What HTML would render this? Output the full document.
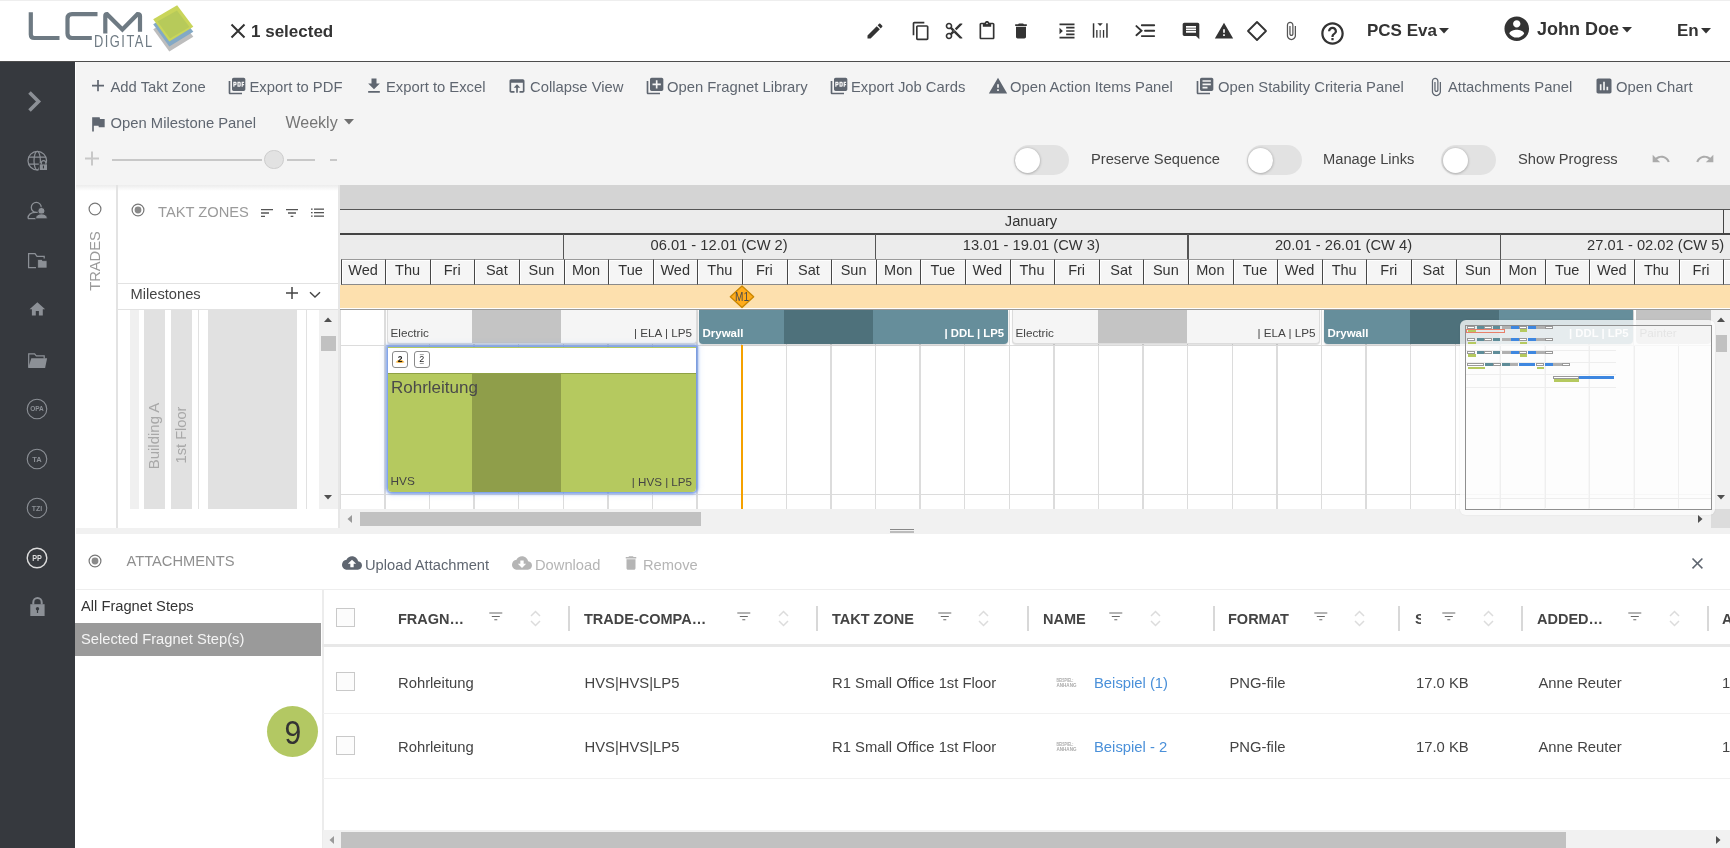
<!DOCTYPE html>
<html><head><meta charset="utf-8">
<style>
*{box-sizing:border-box;margin:0;padding:0}
html,body{width:1730px;height:848px;overflow:hidden;background:#fff;font-family:"Liberation Sans",sans-serif;color:#333}
.a{position:absolute}
.t{position:absolute;white-space:nowrap;line-height:1}
svg{position:absolute;display:block;overflow:visible}
</style></head><body><div style="position:absolute;left:0;top:0;width:1730px;height:848px;overflow:hidden;will-change:transform">
<div class="a" style="left:0px;top:0px;width:1730px;height:61px;background:#fff;"></div>
<div class="a" style="left:0px;top:0px;width:1730px;height:1px;background:#eeeeee;"></div>
<div class="a" style="left:0px;top:61px;width:1730px;height:1px;background:#4d4d4d;"></div>
<svg style="left:20px;top:0px" width="180" height="60" viewBox="0 0 180 60">
<g fill="none" stroke="#6e7a83" stroke-width="4.2">
<path d="M10.8 12.3 V34.5 Q10.8 38 14.3 38 H39.5"/>
<path d="M77.5 14.2 H52 Q47.5 14.2 47.5 18.7 V33.5 Q47.5 38 52 38 H71.8"/>
<path d="M85.3 33.5 V16 Q85.3 14.2 87 14.2 L102.4 29.5 L117.5 14.2 Q120 14.2 120 16 V31.7"/>
</g>
<g transform="translate(74 47) scale(0.74 1)"><text x="0" y="0" font-family="Liberation Sans" font-size="17.4" fill="#6e7a83" textLength="78.5" lengthAdjust="spacing">DIGITAL</text></g>
<polygon points="133.2,29.3 157.1,15.2 173.3,36.8 149.3,51.6" fill="#bdbdbd"/>
<polygon points="133.2,24.3 157.1,10.2 173.3,31.8 149.3,46.6" fill="#83a9c6"/>
<polygon points="133.2,19.3 157.1,5.2 173.3,26.8 149.3,41.6" fill="#c9d55a"/>
<polygon points="137.5,21.5 157,10.5 169.5,27 150,38.5" fill="#b3c75a" opacity="0.8"/>
</svg>
<svg style="left:229px;top:22px" width="18" height="18" viewBox="0 0 18 18"><path d="M2.5 2.5 L15.5 15.5 M15.5 2.5 L2.5 15.5" stroke="#333" stroke-width="2"/></svg>
<div class="t" style="left:251px;top:23px;font-size:17px;color:#333;font-weight:bold;">1 selected</div>
<svg style="left:864.5px;top:21px;" width="20" height="20" viewBox="0 0 24 24"><path fill="#333" d="M3 17.25V21h3.75L17.81 9.94l-3.75-3.75L3 17.25zM20.71 7.04c.39-.39.39-1.02 0-1.41l-2.34-2.34c-.39-.39-1.02-.39-1.41 0l-1.83 1.83 3.75 3.75 1.83-1.83z"/></svg>
<svg style="left:910.5px;top:21px;" width="20" height="20" viewBox="0 0 24 24"><path fill="#333" d="M16 1H4c-1.1 0-2 .9-2 2v14h2V3h12V1zm3 4H8c-1.1 0-2 .9-2 2v14c0 1.1.9 2 2 2h11c1.1 0 2-.9 2-2V7c0-1.1-.9-2-2-2zm0 16H8V7h11v14z"/></svg>
<svg style="left:944px;top:21px;" width="20" height="20" viewBox="0 0 24 24"><path fill="#333" d="M9.64 7.64c.23-.5.36-1.05.36-1.64 0-2.21-1.79-4-4-4S2 3.79 2 6s1.79 4 4 4c.59 0 1.14-.13 1.64-.36L10 12l-2.36 2.36C7.14 14.13 6.59 14 6 14c-2.21 0-4 1.79-4 4s1.79 4 4 4 4-1.79 4-4c0-.59-.13-1.14-.36-1.64L12 14l7 7h3v-1L9.64 7.64zM6 8c-1.1 0-2-.89-2-2s.9-2 2-2 2 .89 2 2-.9 2-2 2zm0 12c-1.1 0-2-.89-2-2s.9-2 2-2 2 .89 2 2-.9 2-2 2zm6-7.5c-.28 0-.5-.22-.5-.5s.22-.5.5-.5.5.22.5.5-.22.5-.5.5zM19 3l-6 6 2 2 7-7V3z"/></svg>
<svg style="left:977px;top:21px;" width="20" height="20" viewBox="0 0 24 24"><path fill="#333" d="M19 2h-4.18C14.4.84 13.3 0 12 0c-1.3 0-2.4.84-2.82 2H5c-1.1 0-2 .9-2 2v16c0 1.1.9 2 2 2h14c1.1 0 2-.9 2-2V4c0-1.1-.9-2-2-2zm-7 0c.55 0 1 .45 1 1s-.45 1-1 1-1-.45-1-1 .45-1 1-1zm7 18H5V4h2v3h10V4h2v16z"/></svg>
<svg style="left:1011px;top:21px;" width="20" height="20" viewBox="0 0 24 24"><path fill="#333" d="M6 19c0 1.1.9 2 2 2h8c1.1 0 2-.9 2-2V7H6v12zM19 4h-3.5l-1-1h-5l-1 1H5v2h14V4z"/></svg>
<svg style="left:1056.5px;top:21px;" width="20" height="20" viewBox="0 0 24 24"><path fill="#333" d="M3 21h18v-2H3v2zM3 8v8l4-4-4-4zm8 9h10v-2H11v2zM3 3v2h18V3H3zm8 6h10V7H11v2zm0 4h10v-2H11v2z"/></svg>
<svg style="left:1085px;top:15px" width="80" height="30" viewBox="0 0 80 30"><g fill="#333"><rect x="7.8" y="8.3" width="1.5" height="14.4"/><rect x="11.2" y="15" width="1.3" height="7.7"/><rect x="14.6" y="15" width="1.2" height="7.7" fill="#555"/><rect x="17.9" y="15" width="1.3" height="7.7"/><rect x="21.2" y="8.3" width="1.5" height="14.4"/><path d="M12.4 8.3 L17.8 8.3 L15.1 11z"/></g><path d="M51.4 11.1 L56.5 15.7 L51.4 20.2" fill="none" stroke="#333" stroke-width="1.9" stroke-linecap="round"/><g stroke="#333" stroke-width="1.85" stroke-linecap="round"><path d="M56.8 10.2 H69.2 M60 15.7 H69.2 M56.8 21.1 H69.2"/></g></svg>
<svg style="left:1180.5px;top:21px;" width="20" height="20" viewBox="0 0 24 24"><path fill="#333" d="M21.99 4c0-1.1-.89-2-1.99-2H4c-1.1 0-2 .9-2 2v12c0 1.1.9 2 2 2h14l4 4-.01-18zM18 14H6v-2h12v2zm0-3H6V9h12v2zm0-3H6V6h12v2z"/></svg>
<svg style="left:1213.7px;top:21px;" width="20" height="20" viewBox="0 0 24 24"><path fill="#333" d="M1 21h22L12 2 1 21zm12-3h-2v-2h2v2zm0-4h-2v-4h2v4z"/></svg>
<svg style="left:1247px;top:21px" width="20" height="20" viewBox="0 0 20 20"><path d="M10 1 L19 10 L10 19 L1 10z" fill="none" stroke="#333" stroke-width="1.8" stroke-linejoin="round"/></svg>
<svg style="left:1281px;top:21px;" width="20" height="20" viewBox="0 0 24 24"><path fill="#555" d="M16.5 6v11.5c0 2.21-1.79 4-4 4s-4-1.79-4-4V5c0-1.38 1.12-2.5 2.5-2.5s2.5 1.12 2.5 2.5v10.5c0 .55-.45 1-1 1s-1-.45-1-1V6H10v9.5c0 1.38 1.12 2.5 2.5 2.5s2.5-1.12 2.5-2.5V5c0-2.21-1.79-4-4-4S7 2.79 7 5v12.5c0 3.04 2.46 5.5 5.5 5.5s5.5-2.46 5.5-5.5V6h-1.5z"/></svg>
<svg style="left:1319px;top:19.8px;" width="27" height="27" viewBox="0 0 24 24"><path fill="#333" d="M11 18h2v-2h-2v2zm1-16C6.48 2 2 6.48 2 12s4.48 10 10 10 10-4.48 10-10S17.52 2 12 2zm0 18c-4.41 0-8-3.59-8-8s3.59-8 8-8 8 3.59 8 8-3.59 8-8 8zm0-14c-2.21 0-4 1.79-4 4h2c0-1.1.9-2 2-2s2 .9 2 2c0 2-3 1.75-3 5h2c0-2.25 3-2.5 3-5 0-2.21-1.79-4-4-4z"/></svg>
<div class="t" style="left:1367px;top:22px;font-size:17px;color:#333;font-weight:bold;">PCS Eva</div>
<svg style="left:1439px;top:28px" width="10" height="6" viewBox="0 0 10 6"><path d="M0 0 H10 L5 5.5z" fill="#333"/></svg>
<svg style="left:1501.5px;top:14px;" width="29.5" height="29.5" viewBox="0 0 24 24"><path fill="#333" d="M12 2C6.48 2 2 6.48 2 12s4.48 10 10 10 10-4.48 10-10S17.52 2 12 2zm0 3c1.66 0 3 1.34 3 3s-1.34 3-3 3-3-1.34-3-3 1.34-3 3-3zm0 14.2c-2.5 0-4.71-1.28-6-3.22.03-1.99 4-3.08 6-3.08 1.99 0 5.97 1.09 6 3.08-1.29 1.94-3.5 3.22-6 3.22z"/></svg>
<div class="t" style="left:1537px;top:20px;font-size:18px;color:#333;font-weight:bold;">John Doe</div>
<svg style="left:1622px;top:27px" width="10" height="6" viewBox="0 0 10 6"><path d="M0 0 H10 L5 5.5z" fill="#333"/></svg>
<div class="t" style="left:1677px;top:22px;font-size:17px;color:#333;font-weight:bold;">En</div>
<svg style="left:1701px;top:28px" width="10" height="6" viewBox="0 0 10 6"><path d="M0 0 H10 L5 5.5z" fill="#333"/></svg>
<div class="a" style="left:0px;top:62px;width:75px;height:786px;background:#36393e;"></div>
<svg style="left:26px;top:89px" width="18" height="25" viewBox="0 0 18 25"><path d="M3.5 3.5 L12.5 12.5 L3.5 21.5" fill="none" stroke="#8c9096" stroke-width="3.6"/></svg>
<svg style="left:22px;top:145px" width="30" height="30" viewBox="0 0 30 30"><g fill="none" stroke="#8c9096" stroke-width="1.2">
<circle cx="15.3" cy="15.7" r="9.3"/><ellipse cx="15.2" cy="15.7" rx="3.2" ry="9.3"/><path d="M6.6 12.2 H24 M6.6 19.1 H24"/></g>
<path d="M16.8 18.2 H27 V26.5 H16.8z" fill="#36393e"/>
<path d="M19.3 19.6 V17.9 a2.3 2.3 0 0 1 4.6 0 V19.6" fill="none" stroke="#8c9096" stroke-width="1.2"/>
<rect x="17.8" y="19.4" width="7.2" height="5.6" fill="#8c9096"/><rect x="20.9" y="20.6" width="1.1" height="2.8" fill="#36393e"/></svg>
<svg style="left:22px;top:195px" width="30" height="30" viewBox="0 0 30 30"><g fill="none" stroke="#8c9096" stroke-width="1.25">
<circle cx="14.3" cy="12.4" r="5"/><path d="M6 23.6 C6 19.4 9.2 17.4 13.8 17.4 M6 23.6 H14"/></g>
<circle cx="19.4" cy="16" r="3.6" fill="#8c9096" stroke="#36393e" stroke-width="1"/><path d="M13.6 23.8 C13.6 20.3 16.2 18.9 19.5 18.9 C22.8 18.9 25.3 20.3 25.3 23.8z" fill="#8c9096" stroke="#36393e" stroke-width="0.8"/></svg>
<svg style="left:22px;top:245px" width="30" height="30" viewBox="0 0 30 30"><path d="M14 22.5 H6.6 V8.6 H13 L15 11.4 H22.2 V13.5" fill="none" stroke="#8c9096" stroke-width="1.25"/>
<path d="M15.6 14.4 H19.4 L20.6 15.6 H25 V23.1 H15.6z" fill="#8c9096" stroke="#36393e" stroke-width="0.8"/></svg>
<svg style="left:27.9px;top:300.2px;" width="18.7" height="18.7" viewBox="0 0 24 24"><path fill="#8c9096" d="M10 20v-6h4v6h5v-8h3L12 3 2 12h3v8z"/></svg>
<svg style="left:22px;top:345px" width="30" height="30" viewBox="0 0 30 30"><path d="M6.7 22.5 V8.9 H12.6 L14.3 10.9 H22.2 V13.4" fill="none" stroke="#8c9096" stroke-width="1.2"/>
<path d="M9.3 13.2 H25.1 L23.1 23 H6.2z" fill="#8c9096"/></svg>
<svg style="left:26px;top:398px" width="22" height="22" viewBox="0 0 22 22"><circle cx="11" cy="11" r="9.8" fill="none" stroke="#8c9096" stroke-width="1.1"/><text x="11" y="13.34" text-anchor="middle" font-family="Liberation Sans" font-size="6.5" font-weight="bold" fill="#8c9096">OPA</text></svg>
<svg style="left:26px;top:448px" width="22" height="22" viewBox="0 0 22 22"><circle cx="11" cy="11" r="9.8" fill="none" stroke="#8c9096" stroke-width="1.1"/><text x="11" y="13.70" text-anchor="middle" font-family="Liberation Sans" font-size="7.5" font-weight="bold" fill="#8c9096">TA</text></svg>
<svg style="left:26px;top:497px" width="22" height="22" viewBox="0 0 22 22"><circle cx="11" cy="11" r="9.8" fill="none" stroke="#8c9096" stroke-width="1.1"/><text x="11" y="13.52" text-anchor="middle" font-family="Liberation Sans" font-size="7" font-weight="bold" fill="#8c9096">TZI</text></svg>
<svg style="left:26px;top:547px" width="22" height="22" viewBox="0 0 22 22"><circle cx="11" cy="11" r="9.8" fill="none" stroke="#dcdcdc" stroke-width="1.4"/><text x="11" y="14.06" text-anchor="middle" font-family="Liberation Sans" font-size="8.5" font-weight="bold" fill="#dcdcdc" transform="translate(11 0) scale(0.85 1) translate(-11 0)">PP</text></svg>
<svg style="left:22px;top:590px" width="30" height="30" viewBox="0 0 30 30"><path d="M11.3 14.5 V12.2 a4.2 4.2 0 0 1 8.4 0 V14.5" fill="none" stroke="#8c9096" stroke-width="2"/><rect x="8.3" y="14.2" width="14.3" height="11.8" fill="#8c9096"/><circle cx="15.5" cy="18.8" r="1.7" fill="#36393e"/><rect x="14.9" y="19" width="1.2" height="4" fill="#36393e"/></svg>
<div class="a" style="left:75px;top:62px;width:1px;height:786px;background:#ffffff;"></div>
<div class="a" style="left:76px;top:62px;width:1654px;height:123px;background:#f4f4f4;"></div>
<svg style="left:91px;top:79px" width="14" height="14" viewBox="0 0 14 14"><path d="M1 6.7 H13 M7 1 V12.3" stroke="#5f6670" stroke-width="1.7"/></svg>
<div class="t" style="left:110.5px;top:80px;font-size:14.8px;color:#5f6670;">Add Takt Zone</div>
<svg style="left:227.4px;top:75.6px;" width="20" height="20" viewBox="0 0 24 24"><path fill="#5f6670" d="M20 2H8c-1.1 0-2 .9-2 2v12c0 1.1.9 2 2 2h12c1.1 0 2-.9 2-2V4c0-1.1-.9-2-2-2zm-8.5 7.5c0 .83-.67 1.5-1.5 1.5H9v2H7.5V7H10c.83 0 1.5.67 1.5 1.5v1zm5 2c0 .83-.67 1.5-1.5 1.5h-2.5V7H15c.83 0 1.5.67 1.5 1.5v3zm4-3H19v1h1.5V11H19v2h-1.5V7h3v1.5zM9 9.5h1v-1H9v1zM4 6H2v14c0 1.1.9 2 2 2h14v-2H4V6zm10 5.5h1v-3h-1v3z"/></svg>
<div class="t" style="left:249.5px;top:80px;font-size:14.8px;color:#5f6670;">Export to PDF</div>
<svg style="left:364px;top:76px;" width="20" height="20" viewBox="0 0 24 24"><path fill="#5f6670" d="M19 9h-4V3H9v6H5l7 7 7-7zM5 18v2h14v-2H5z"/></svg>
<div class="t" style="left:386px;top:80px;font-size:14.8px;color:#5f6670;">Export to Excel</div>
<svg style="left:507px;top:76.2px;" width="20" height="20" viewBox="0 0 24 24"><path fill="#5f6670" d="M19 4H5c-1.11 0-2 .9-2 2v12c0 1.1.89 2 2 2h4v-2H5V8h14v10h-4v2h4c1.1 0 2-.9 2-2V6c0-1.1-.89-2-2-2zm-7 6l-4 4h3v6h2v-6h3l-4-4z"/></svg>
<div class="t" style="left:530px;top:80px;font-size:14.8px;color:#5f6670;">Collapse View</div>
<svg style="left:644.5px;top:76px;" width="20" height="20" viewBox="0 0 24 24"><path fill="#5f6670" d="M4 6H2v14c0 1.1.9 2 2 2h14v-2H4V6zm16-4H8c-1.1 0-2 .9-2 2v12c0 1.1.9 2 2 2h12c1.1 0 2-.9 2-2V4c0-1.1-.9-2-2-2zm-1 9h-4v4h-2v-4H9V9h4V5h2v4h4v2z"/></svg>
<div class="t" style="left:667px;top:80px;font-size:14.8px;color:#5f6670;">Open Fragnet Library</div>
<svg style="left:829.3px;top:75.6px;" width="20" height="20" viewBox="0 0 24 24"><path fill="#5f6670" d="M20 2H8c-1.1 0-2 .9-2 2v12c0 1.1.9 2 2 2h12c1.1 0 2-.9 2-2V4c0-1.1-.9-2-2-2zm-8.5 7.5c0 .83-.67 1.5-1.5 1.5H9v2H7.5V7H10c.83 0 1.5.67 1.5 1.5v1zm5 2c0 .83-.67 1.5-1.5 1.5h-2.5V7H15c.83 0 1.5.67 1.5 1.5v3zm4-3H19v1h1.5V11H19v2h-1.5V7h3v1.5zM9 9.5h1v-1H9v1zM4 6H2v14c0 1.1.9 2 2 2h14v-2H4V6zm10 5.5h1v-3h-1v3z"/></svg>
<div class="t" style="left:851px;top:80px;font-size:14.8px;color:#5f6670;">Export Job Cards</div>
<svg style="left:987.5px;top:76.2px;" width="20" height="20" viewBox="0 0 24 24"><path fill="#5f6670" d="M1 21h22L12 2 1 21zm12-3h-2v-2h2v2zm0-4h-2v-4h2v4z"/></svg>
<div class="t" style="left:1010px;top:80px;font-size:14.8px;color:#5f6670;">Open Action Items Panel</div>
<svg style="left:1195px;top:76.3px;" width="20" height="20" viewBox="0 0 24 24"><path fill="#5f6670" d="M4 6H2v14c0 1.1.9 2 2 2h14v-2H4V6zm16-4H8c-1.1 0-2 .9-2 2v12c0 1.1.9 2 2 2h12c1.1 0 2-.9 2-2V4c0-1.1-.9-2-2-2zm-1 9H9V9h10v2zm-4 4H9v-2h6v2zm4-8H9V5h10v2z"/></svg>
<div class="t" style="left:1218px;top:80px;font-size:14.8px;color:#5f6670;">Open Stability Criteria Panel</div>
<svg style="left:1425.5px;top:76.5px;" width="20" height="20" viewBox="0 0 24 24"><path fill="#5f6670" d="M16.5 6v11.5c0 2.21-1.79 4-4 4s-4-1.79-4-4V5c0-1.38 1.12-2.5 2.5-2.5s2.5 1.12 2.5 2.5v10.5c0 .55-.45 1-1 1s-1-.45-1-1V6H10v9.5c0 1.38 1.12 2.5 2.5 2.5s2.5-1.12 2.5-2.5V5c0-2.21-1.79-4-4-4S7 2.79 7 5v12.5c0 3.04 2.46 5.5 5.5 5.5s5.5-2.46 5.5-5.5V6h-1.5z"/></svg>
<div class="t" style="left:1448px;top:80px;font-size:14.8px;color:#5f6670;">Attachments Panel</div>
<svg style="left:1593.5px;top:75.5px;" width="20" height="20" viewBox="0 0 24 24"><path fill="#5f6670" d="M19 3H5c-1.1 0-2 .9-2 2v14c0 1.1.9 2 2 2h14c1.1 0 2-.9 2-2V5c0-1.1-.9-2-2-2zM9 17H7v-7h2v7zm4 0h-2V7h2v10zm4 0h-2v-4h2v4z"/></svg>
<div class="t" style="left:1616px;top:80px;font-size:14.8px;color:#5f6670;">Open Chart</div>
<svg style="left:88px;top:113.7px;" width="20" height="20" viewBox="0 0 24 24"><path fill="#5f6670" d="M14.4 6L14 4H5v17h2v-7h5.6l.4 2h7V6z"/></svg>
<div class="t" style="left:110.5px;top:116px;font-size:14.8px;color:#5f6670;">Open Milestone Panel</div>
<div class="t" style="left:285.5px;top:115px;font-size:16px;color:#757575;">Weekly</div>
<svg style="left:344px;top:119px" width="10" height="6" viewBox="0 0 10 6"><path d="M0 0 H10 L5 5.5z" fill="#707070"/></svg>
<svg style="left:80px;top:146px" width="24" height="24" viewBox="0 0 24 24"><path d="M5 12.5 H19 M12 5.5 V19.5" stroke="#c8c8c8" stroke-width="2"/></svg>
<div class="a" style="left:112px;top:159px;width:150px;height:2px;background:#c8c8c8;"></div>
<div class="a" style="left:287px;top:159px;width:28px;height:2px;background:#c8c8c8;"></div>
<div class="a" style="left:330px;top:159px;width:7px;height:1.5px;background:#c8c8c8;"></div>
<div class="a" style="left:264.2px;top:149.5px;width:19.5px;height:19.5px;border-radius:50%;background:#e2e2e2;border:1px solid #cdcdcd"></div>
<div class="a" style="left:1013.5px;top:145px;width:55px;height:30px;border-radius:15px;background:#e2e2e2"></div>
<div class="a" style="left:1015.0px;top:147.6px;width:25px;height:25px;border-radius:50%;background:#fff;box-shadow:0 0.5px 3px rgba(0,0,0,0.32)"></div>
<div class="t" style="left:1091px;top:152px;font-size:14.7px;color:#444;">Preserve Sequence</div>
<div class="a" style="left:1246.5px;top:145px;width:55px;height:30px;border-radius:15px;background:#e2e2e2"></div>
<div class="a" style="left:1248.0px;top:147.6px;width:25px;height:25px;border-radius:50%;background:#fff;box-shadow:0 0.5px 3px rgba(0,0,0,0.32)"></div>
<div class="t" style="left:1323px;top:152px;font-size:14.7px;color:#444;">Manage Links</div>
<div class="a" style="left:1441px;top:145px;width:55px;height:30px;border-radius:15px;background:#e2e2e2"></div>
<div class="a" style="left:1442.5px;top:147.6px;width:25px;height:25px;border-radius:50%;background:#fff;box-shadow:0 0.5px 3px rgba(0,0,0,0.32)"></div>
<div class="t" style="left:1518px;top:152px;font-size:14.7px;color:#444;">Show Progress</div>
<svg style="left:1650.5px;top:148.8px;" width="20" height="20" viewBox="0 0 24 24"><path fill="#ababab" d="M12.5 8c-2.65 0-5.05.99-6.9 2.6L2 7v9h9l-3.62-3.62c1.39-1.16 3.16-1.88 5.12-1.88 3.54 0 6.55 2.31 7.6 5.5l2.37-.78C21.08 11.03 17.15 8 12.5 8z"/></svg>
<svg style="left:1694.5px;top:148.8px;" width="20" height="20" viewBox="0 0 24 24"><path fill="#ababab" d="M18.4 10.6C16.55 8.99 14.15 8 11.5 8c-4.65 0-8.58 3.03-9.96 7.22L3.9 16c1.05-3.19 4.05-5.5 7.6-5.5 1.95 0 3.73.72 5.12 1.88L13 16h9V7l-3.6 3.6z"/></svg>
<div class="a" style="left:76px;top:185px;width:1654px;height:343px;background:#ffffff;"></div>
<div class="a" style="left:76px;top:185px;width:1654px;height:6px;background:linear-gradient(#ececec,rgba(255,255,255,0))"></div>
<div class="a" style="left:116px;top:185px;width:2px;height:343px;background:#e3e3e3;"></div>
<svg style="left:88px;top:202px" width="14" height="14" viewBox="0 0 14 14"><circle cx="7" cy="7" r="5.9" fill="none" stroke="#777" stroke-width="1.2"/></svg>
<div class="t" style="left:95px;top:261px;font-size:14.7px;color:#9a9a9a;transform:translate(-50%,-50%) rotate(-90deg)">TRADES</div>
<svg style="left:130.5px;top:202.5px" width="14" height="14" viewBox="0 0 14 14"><circle cx="7" cy="7" r="5.9" fill="none" stroke="#777" stroke-width="1.2"/><circle cx="7" cy="7" r="3.4" fill="#8a8a8a"/></svg>
<div class="t" style="left:158px;top:205px;font-size:14.7px;color:#9a9a9a;">TAKT ZONES</div>
<svg style="left:259px;top:205px;" width="16" height="16" viewBox="0 0 24 24"><path fill="#555" d="M3 18h6v-2H3v2zM3 6v2h18V6H3zm0 7h12v-2H3v2z"/></svg>
<svg style="left:283.5px;top:205px;" width="16" height="16" viewBox="0 0 24 24"><path fill="#555" d="M10 18h4v-2h-4v2zM3 6v2h18V6H3zm3 7h12v-2H6v2z"/></svg>
<svg style="left:310.5px;top:207.5px" width="13" height="10" viewBox="0 0 13 10"><g fill="#555"><rect x="0" y="0.5" width="1.6" height="1.3"/><rect x="0" y="4" width="1.6" height="1.3"/><rect x="0" y="7.5" width="1.6" height="1.3"/><rect x="3" y="0.5" width="10" height="1.3"/><rect x="3" y="4" width="10" height="1.3"/><rect x="3" y="7.5" width="10" height="1.3"/></g></svg>
<div class="a" style="left:118px;top:283px;width:220px;height:1px;background:#e2e2e2;"></div>
<div class="a" style="left:118px;top:309px;width:220px;height:1px;background:#e2e2e2;"></div>
<div class="t" style="left:130.5px;top:287px;font-size:14.7px;color:#444;">Milestones</div>
<svg style="left:285px;top:286px" width="14" height="14" viewBox="0 0 14 14"><path d="M1 7 H13 M7 1 V13" stroke="#444" stroke-width="1.5"/></svg>
<svg style="left:309px;top:291px" width="12" height="8" viewBox="0 0 12 8"><path d="M1 1.2 L6 6 L11 1.2" fill="none" stroke="#444" stroke-width="1.4"/></svg>
<div class="a" style="left:130px;top:310px;width:9px;height:199px;background:#f0f0f0;"></div>
<div class="a" style="left:144px;top:310px;width:21px;height:199px;background:#e1e1e1;"></div>
<div class="a" style="left:171px;top:310px;width:21px;height:199px;background:#e1e1e1;"></div>
<div class="a" style="left:198px;top:310px;width:1px;height:199px;background:#e1e1e1;"></div>
<div class="a" style="left:208px;top:310px;width:89px;height:199px;background:#e1e1e1;"></div>
<div class="a" style="left:306px;top:310px;width:1px;height:199px;background:#e1e1e1;"></div>
<div class="t" style="left:153.3px;top:435.6px;font-size:15px;color:#a8a8a8;transform:translate(-50%,-50%) rotate(-90deg)">Building A</div>
<div class="t" style="left:181px;top:435px;font-size:14.6px;color:#a8a8a8;transform:translate(-50%,-50%) rotate(-90deg)">1st Floor</div>
<div class="a" style="left:319px;top:310px;width:19px;height:199px;background:#f1f1f1;"></div>
<svg style="left:323px;top:316px" width="10" height="7" viewBox="0 0 10 7"><path d="M1 6 H9 L5 1.5z" fill="#505050"/></svg>
<div class="a" style="left:321px;top:336px;width:15px;height:15px;background:#c1c1c1;"></div>
<svg style="left:323px;top:494px" width="10" height="7" viewBox="0 0 10 7"><path d="M1 1 H9 L5 5.5z" fill="#505050"/></svg>
<div class="a" style="left:338px;top:185px;width:2px;height:343px;background:#e6e6e6;"></div>
<div class="a" style="left:340px;top:185px;width:1390px;height:24px;background:#d4d4d4;"></div>
<div class="a" style="left:340px;top:209px;width:1390px;height:1px;background:#555;"></div>
<div class="a" style="left:340px;top:210px;width:1390px;height:23px;background:#ececec;"></div>
<div class="a" style="left:340px;top:233px;width:1390px;height:2px;background:#444;"></div>
<div class="a" style="left:1723px;top:210px;width:1px;height:23px;background:#444;"></div>
<div class="t" style="left:731px;width:600px;text-align:center;top:214px;font-size:14.7px;color:#333;">January</div>
<div class="a" style="left:340px;top:235px;width:1390px;height:24px;background:#ececec;"></div>
<div class="a" style="left:563.0px;top:234px;width:1.2px;height:25px;background:#555;"></div>
<div class="t" style="left:419.1px;width:600px;text-align:center;top:238px;font-size:14.7px;color:#333;">06.01 - 12.01 (CW 2)</div>
<div class="a" style="left:875.2px;top:234px;width:1.2px;height:25px;background:#555;"></div>
<div class="t" style="left:731.3px;width:600px;text-align:center;top:238px;font-size:14.7px;color:#333;">13.01 - 19.01 (CW 3)</div>
<div class="a" style="left:1187.4px;top:234px;width:1.2px;height:25px;background:#555;"></div>
<div class="t" style="left:1043.5px;width:600px;text-align:center;top:238px;font-size:14.7px;color:#333;">20.01 - 26.01 (CW 4)</div>
<div class="a" style="left:1499.6px;top:234px;width:1.2px;height:25px;background:#555;"></div>
<div class="t" style="left:1355.6999999999998px;width:600px;text-align:center;top:238px;font-size:14.7px;color:#333;">27.01 - 02.02 (CW 5)</div>
<div class="a" style="left:340px;top:259px;width:1390px;height:25.5px;background:#f5f5f5;"></div>
<div class="a" style="left:340.60px;top:258.5px;width:44.60px;height:26px;border-left:1.3px solid #474747;border-top:1px solid #9a9a9a;border-bottom:1px solid #8a8a8a;box-shadow:inset 1px 1px 0 #fff"></div>
<div class="t" style="left:63.0px;width:600px;text-align:center;top:263px;font-size:14.5px;color:#333;">Wed</div>
<div class="a" style="left:385.20px;top:258.5px;width:44.60px;height:26px;border-left:1.3px solid #474747;border-top:1px solid #9a9a9a;border-bottom:1px solid #8a8a8a;box-shadow:inset 1px 1px 0 #fff"></div>
<div class="t" style="left:107.60000000000002px;width:600px;text-align:center;top:263px;font-size:14.5px;color:#333;">Thu</div>
<div class="a" style="left:429.80px;top:258.5px;width:44.60px;height:26px;border-left:1.3px solid #474747;border-top:1px solid #9a9a9a;border-bottom:1px solid #8a8a8a;box-shadow:inset 1px 1px 0 #fff"></div>
<div class="t" style="left:152.2px;width:600px;text-align:center;top:263px;font-size:14.5px;color:#333;">Fri</div>
<div class="a" style="left:474.40px;top:258.5px;width:44.60px;height:26px;border-left:1.3px solid #474747;border-top:1px solid #9a9a9a;border-bottom:1px solid #8a8a8a;box-shadow:inset 1px 1px 0 #fff"></div>
<div class="t" style="left:196.8px;width:600px;text-align:center;top:263px;font-size:14.5px;color:#333;">Sat</div>
<div class="a" style="left:519.00px;top:258.5px;width:44.60px;height:26px;border-left:1.3px solid #474747;border-top:1px solid #9a9a9a;border-bottom:1px solid #8a8a8a;box-shadow:inset 1px 1px 0 #fff"></div>
<div class="t" style="left:241.39999999999998px;width:600px;text-align:center;top:263px;font-size:14.5px;color:#333;">Sun</div>
<div class="a" style="left:563.60px;top:258.5px;width:44.60px;height:26px;border-left:1.3px solid #474747;border-top:1px solid #9a9a9a;border-bottom:1px solid #8a8a8a;box-shadow:inset 1px 1px 0 #fff"></div>
<div class="t" style="left:286.0px;width:600px;text-align:center;top:263px;font-size:14.5px;color:#333;">Mon</div>
<div class="a" style="left:608.20px;top:258.5px;width:44.60px;height:26px;border-left:1.3px solid #474747;border-top:1px solid #9a9a9a;border-bottom:1px solid #8a8a8a;box-shadow:inset 1px 1px 0 #fff"></div>
<div class="t" style="left:330.6px;width:600px;text-align:center;top:263px;font-size:14.5px;color:#333;">Tue</div>
<div class="a" style="left:652.80px;top:258.5px;width:44.60px;height:26px;border-left:1.3px solid #474747;border-top:1px solid #9a9a9a;border-bottom:1px solid #8a8a8a;box-shadow:inset 1px 1px 0 #fff"></div>
<div class="t" style="left:375.20000000000005px;width:600px;text-align:center;top:263px;font-size:14.5px;color:#333;">Wed</div>
<div class="a" style="left:697.40px;top:258.5px;width:44.60px;height:26px;border-left:1.3px solid #474747;border-top:1px solid #9a9a9a;border-bottom:1px solid #8a8a8a;box-shadow:inset 1px 1px 0 #fff"></div>
<div class="t" style="left:419.79999999999995px;width:600px;text-align:center;top:263px;font-size:14.5px;color:#333;">Thu</div>
<div class="a" style="left:742.00px;top:258.5px;width:44.60px;height:26px;border-left:1.3px solid #474747;border-top:1px solid #9a9a9a;border-bottom:1px solid #8a8a8a;box-shadow:inset 1px 1px 0 #fff"></div>
<div class="t" style="left:464.4000000000001px;width:600px;text-align:center;top:263px;font-size:14.5px;color:#333;">Fri</div>
<div class="a" style="left:786.60px;top:258.5px;width:44.60px;height:26px;border-left:1.3px solid #474747;border-top:1px solid #9a9a9a;border-bottom:1px solid #8a8a8a;box-shadow:inset 1px 1px 0 #fff"></div>
<div class="t" style="left:509.0px;width:600px;text-align:center;top:263px;font-size:14.5px;color:#333;">Sat</div>
<div class="a" style="left:831.20px;top:258.5px;width:44.60px;height:26px;border-left:1.3px solid #474747;border-top:1px solid #9a9a9a;border-bottom:1px solid #8a8a8a;box-shadow:inset 1px 1px 0 #fff"></div>
<div class="t" style="left:553.6px;width:600px;text-align:center;top:263px;font-size:14.5px;color:#333;">Sun</div>
<div class="a" style="left:875.80px;top:258.5px;width:44.60px;height:26px;border-left:1.3px solid #474747;border-top:1px solid #9a9a9a;border-bottom:1px solid #8a8a8a;box-shadow:inset 1px 1px 0 #fff"></div>
<div class="t" style="left:598.2px;width:600px;text-align:center;top:263px;font-size:14.5px;color:#333;">Mon</div>
<div class="a" style="left:920.40px;top:258.5px;width:44.60px;height:26px;border-left:1.3px solid #474747;border-top:1px solid #9a9a9a;border-bottom:1px solid #8a8a8a;box-shadow:inset 1px 1px 0 #fff"></div>
<div class="t" style="left:642.8000000000001px;width:600px;text-align:center;top:263px;font-size:14.5px;color:#333;">Tue</div>
<div class="a" style="left:965.00px;top:258.5px;width:44.60px;height:26px;border-left:1.3px solid #474747;border-top:1px solid #9a9a9a;border-bottom:1px solid #8a8a8a;box-shadow:inset 1px 1px 0 #fff"></div>
<div class="t" style="left:687.4px;width:600px;text-align:center;top:263px;font-size:14.5px;color:#333;">Wed</div>
<div class="a" style="left:1009.60px;top:258.5px;width:44.60px;height:26px;border-left:1.3px solid #474747;border-top:1px solid #9a9a9a;border-bottom:1px solid #8a8a8a;box-shadow:inset 1px 1px 0 #fff"></div>
<div class="t" style="left:732.0px;width:600px;text-align:center;top:263px;font-size:14.5px;color:#333;">Thu</div>
<div class="a" style="left:1054.20px;top:258.5px;width:44.60px;height:26px;border-left:1.3px solid #474747;border-top:1px solid #9a9a9a;border-bottom:1px solid #8a8a8a;box-shadow:inset 1px 1px 0 #fff"></div>
<div class="t" style="left:776.5999999999999px;width:600px;text-align:center;top:263px;font-size:14.5px;color:#333;">Fri</div>
<div class="a" style="left:1098.80px;top:258.5px;width:44.60px;height:26px;border-left:1.3px solid #474747;border-top:1px solid #9a9a9a;border-bottom:1px solid #8a8a8a;box-shadow:inset 1px 1px 0 #fff"></div>
<div class="t" style="left:821.2px;width:600px;text-align:center;top:263px;font-size:14.5px;color:#333;">Sat</div>
<div class="a" style="left:1143.40px;top:258.5px;width:44.60px;height:26px;border-left:1.3px solid #474747;border-top:1px solid #9a9a9a;border-bottom:1px solid #8a8a8a;box-shadow:inset 1px 1px 0 #fff"></div>
<div class="t" style="left:865.8000000000002px;width:600px;text-align:center;top:263px;font-size:14.5px;color:#333;">Sun</div>
<div class="a" style="left:1188.00px;top:258.5px;width:44.60px;height:26px;border-left:1.3px solid #474747;border-top:1px solid #9a9a9a;border-bottom:1px solid #8a8a8a;box-shadow:inset 1px 1px 0 #fff"></div>
<div class="t" style="left:910.4000000000001px;width:600px;text-align:center;top:263px;font-size:14.5px;color:#333;">Mon</div>
<div class="a" style="left:1232.60px;top:258.5px;width:44.60px;height:26px;border-left:1.3px solid #474747;border-top:1px solid #9a9a9a;border-bottom:1px solid #8a8a8a;box-shadow:inset 1px 1px 0 #fff"></div>
<div class="t" style="left:955.0px;width:600px;text-align:center;top:263px;font-size:14.5px;color:#333;">Tue</div>
<div class="a" style="left:1277.20px;top:258.5px;width:44.60px;height:26px;border-left:1.3px solid #474747;border-top:1px solid #9a9a9a;border-bottom:1px solid #8a8a8a;box-shadow:inset 1px 1px 0 #fff"></div>
<div class="t" style="left:999.5999999999999px;width:600px;text-align:center;top:263px;font-size:14.5px;color:#333;">Wed</div>
<div class="a" style="left:1321.80px;top:258.5px;width:44.60px;height:26px;border-left:1.3px solid #474747;border-top:1px solid #9a9a9a;border-bottom:1px solid #8a8a8a;box-shadow:inset 1px 1px 0 #fff"></div>
<div class="t" style="left:1044.2px;width:600px;text-align:center;top:263px;font-size:14.5px;color:#333;">Thu</div>
<div class="a" style="left:1366.40px;top:258.5px;width:44.60px;height:26px;border-left:1.3px solid #474747;border-top:1px solid #9a9a9a;border-bottom:1px solid #8a8a8a;box-shadow:inset 1px 1px 0 #fff"></div>
<div class="t" style="left:1088.8px;width:600px;text-align:center;top:263px;font-size:14.5px;color:#333;">Fri</div>
<div class="a" style="left:1411.00px;top:258.5px;width:44.60px;height:26px;border-left:1.3px solid #474747;border-top:1px solid #9a9a9a;border-bottom:1px solid #8a8a8a;box-shadow:inset 1px 1px 0 #fff"></div>
<div class="t" style="left:1133.4px;width:600px;text-align:center;top:263px;font-size:14.5px;color:#333;">Sat</div>
<div class="a" style="left:1455.60px;top:258.5px;width:44.60px;height:26px;border-left:1.3px solid #474747;border-top:1px solid #9a9a9a;border-bottom:1px solid #8a8a8a;box-shadow:inset 1px 1px 0 #fff"></div>
<div class="t" style="left:1178.0px;width:600px;text-align:center;top:263px;font-size:14.5px;color:#333;">Sun</div>
<div class="a" style="left:1500.20px;top:258.5px;width:44.60px;height:26px;border-left:1.3px solid #474747;border-top:1px solid #9a9a9a;border-bottom:1px solid #8a8a8a;box-shadow:inset 1px 1px 0 #fff"></div>
<div class="t" style="left:1222.6000000000001px;width:600px;text-align:center;top:263px;font-size:14.5px;color:#333;">Mon</div>
<div class="a" style="left:1544.80px;top:258.5px;width:44.60px;height:26px;border-left:1.3px solid #474747;border-top:1px solid #9a9a9a;border-bottom:1px solid #8a8a8a;box-shadow:inset 1px 1px 0 #fff"></div>
<div class="t" style="left:1267.2px;width:600px;text-align:center;top:263px;font-size:14.5px;color:#333;">Tue</div>
<div class="a" style="left:1589.40px;top:258.5px;width:44.60px;height:26px;border-left:1.3px solid #474747;border-top:1px solid #9a9a9a;border-bottom:1px solid #8a8a8a;box-shadow:inset 1px 1px 0 #fff"></div>
<div class="t" style="left:1311.8px;width:600px;text-align:center;top:263px;font-size:14.5px;color:#333;">Wed</div>
<div class="a" style="left:1634.00px;top:258.5px;width:44.60px;height:26px;border-left:1.3px solid #474747;border-top:1px solid #9a9a9a;border-bottom:1px solid #8a8a8a;box-shadow:inset 1px 1px 0 #fff"></div>
<div class="t" style="left:1356.4px;width:600px;text-align:center;top:263px;font-size:14.5px;color:#333;">Thu</div>
<div class="a" style="left:1678.60px;top:258.5px;width:44.60px;height:26px;border-left:1.3px solid #474747;border-top:1px solid #9a9a9a;border-bottom:1px solid #8a8a8a;box-shadow:inset 1px 1px 0 #fff"></div>
<div class="t" style="left:1401.0px;width:600px;text-align:center;top:263px;font-size:14.5px;color:#333;">Fri</div>
<div class="a" style="left:1723.20px;top:258.5px;width:44.60px;height:26px;border-left:1.3px solid #474747;border-top:1px solid #9a9a9a;border-bottom:1px solid #8a8a8a;box-shadow:inset 1px 1px 0 #fff"></div>
<div class="t" style="left:1445.6000000000001px;width:600px;text-align:center;top:263px;font-size:14.5px;color:#333;">Sat</div>
<div class="a" style="left:340px;top:284.5px;width:1390px;height:23.5px;background:#fde0ae;"></div>
<div class="a" style="left:340px;top:308px;width:1390px;height:1px;background:#ffffff;"></div>
<div class="a" style="left:340px;top:309px;width:1390px;height:1px;background:#9a9a9a;"></div>
<div class="a" style="left:340px;top:310px;width:1371px;height:199px;background:#ffffff;"></div>
<div class="a" style="left:339.5px;top:310px;width:1.5px;height:199px;background:#dcdcdc;"></div>
<div class="a" style="left:384.1px;top:310px;width:1.5px;height:199px;background:#dcdcdc;"></div>
<div class="a" style="left:428.7px;top:310px;width:1.5px;height:199px;background:#dcdcdc;"></div>
<div class="a" style="left:473.3px;top:310px;width:1.5px;height:199px;background:#dcdcdc;"></div>
<div class="a" style="left:517.9px;top:310px;width:1.5px;height:199px;background:#dcdcdc;"></div>
<div class="a" style="left:562.5px;top:310px;width:1.5px;height:199px;background:#dcdcdc;"></div>
<div class="a" style="left:607.1px;top:310px;width:1.5px;height:199px;background:#dcdcdc;"></div>
<div class="a" style="left:651.7px;top:310px;width:1.5px;height:199px;background:#dcdcdc;"></div>
<div class="a" style="left:696.3px;top:310px;width:1.5px;height:199px;background:#dcdcdc;"></div>
<div class="a" style="left:740.9px;top:310px;width:1.5px;height:199px;background:#dcdcdc;"></div>
<div class="a" style="left:785.5px;top:310px;width:1.5px;height:199px;background:#dcdcdc;"></div>
<div class="a" style="left:830.1px;top:310px;width:1.5px;height:199px;background:#dcdcdc;"></div>
<div class="a" style="left:874.7px;top:310px;width:1.5px;height:199px;background:#dcdcdc;"></div>
<div class="a" style="left:919.3px;top:310px;width:1.5px;height:199px;background:#dcdcdc;"></div>
<div class="a" style="left:963.9px;top:310px;width:1.5px;height:199px;background:#dcdcdc;"></div>
<div class="a" style="left:1008.5px;top:310px;width:1.5px;height:199px;background:#dcdcdc;"></div>
<div class="a" style="left:1053.1px;top:310px;width:1.5px;height:199px;background:#dcdcdc;"></div>
<div class="a" style="left:1097.7px;top:310px;width:1.5px;height:199px;background:#dcdcdc;"></div>
<div class="a" style="left:1142.3px;top:310px;width:1.5px;height:199px;background:#dcdcdc;"></div>
<div class="a" style="left:1186.9px;top:310px;width:1.5px;height:199px;background:#dcdcdc;"></div>
<div class="a" style="left:1231.5px;top:310px;width:1.5px;height:199px;background:#dcdcdc;"></div>
<div class="a" style="left:1276.1px;top:310px;width:1.5px;height:199px;background:#dcdcdc;"></div>
<div class="a" style="left:1320.7px;top:310px;width:1.5px;height:199px;background:#dcdcdc;"></div>
<div class="a" style="left:1365.3px;top:310px;width:1.5px;height:199px;background:#dcdcdc;"></div>
<div class="a" style="left:1409.9px;top:310px;width:1.5px;height:199px;background:#dcdcdc;"></div>
<div class="a" style="left:1454.5px;top:310px;width:1.5px;height:199px;background:#dcdcdc;"></div>
<div class="a" style="left:1499.1px;top:310px;width:1.5px;height:199px;background:#dcdcdc;"></div>
<div class="a" style="left:1543.7px;top:310px;width:1.5px;height:199px;background:#dcdcdc;"></div>
<div class="a" style="left:1588.3px;top:310px;width:1.5px;height:199px;background:#dcdcdc;"></div>
<div class="a" style="left:1632.9px;top:310px;width:1.5px;height:199px;background:#dcdcdc;"></div>
<div class="a" style="left:1677.5px;top:310px;width:1.5px;height:199px;background:#dcdcdc;"></div>
<div class="a" style="left:1722.1px;top:310px;width:1.5px;height:199px;background:#dcdcdc;"></div>
<div class="a" style="left:340px;top:345px;width:1371px;height:1.2px;background:#dcdcdc;"></div>
<div class="a" style="left:340px;top:494px;width:1371px;height:1.2px;background:#dcdcdc;"></div>
<div class="a" style="left:387px;top:310px;width:309.5px;height:33.5px;background:#f5f5f5;border-radius:0 0 4px 4px;border:1px solid #dcdcdc;border-top:none;box-shadow:0 1px 1px rgba(0,0,0,0.12);overflow:hidden"><div class="a" style="left:84.19999999999999px;top:0;width:89.30000000000001px;height:34px;background:#c4c4c4"></div></div>
<div class="t" style="left:390.5px;top:327px;font-size:11.7px;color:#444;">Electric</div>
<div class="t" style="right:1038.0px;top:327px;font-size:11.7px;color:#444;">| ELA | LP5</div>
<div class="a" style="left:699px;top:310px;width:309px;height:33.8px;background:#668e9b;border-radius:0 0 4px 4px;box-shadow:0 1px 2px rgba(0,0,0,0.18);overflow:hidden"><div class="a" style="left:85.20000000000005px;top:0;width:88.79999999999995px;height:34px;background:#4e717b"></div></div>
<div class="t" style="left:702.5px;top:328px;font-size:11.5px;color:#ffffff;font-weight:bold;">Drywall</div>
<div class="t" style="right:726px;top:328px;font-size:11.3px;color:#ffffff;font-weight:bold;">| DDL | LP5</div>
<div class="a" style="left:1012px;top:310px;width:308px;height:33.5px;background:#f5f5f5;border-radius:0 0 4px 4px;border:1px solid #dcdcdc;border-top:none;box-shadow:0 1px 1px rgba(0,0,0,0.12);overflow:hidden"><div class="a" style="left:84.5px;top:0;width:89.0px;height:34px;background:#c4c4c4"></div></div>
<div class="t" style="left:1015.5px;top:327px;font-size:11.7px;color:#444;">Electric</div>
<div class="t" style="right:414.5px;top:327px;font-size:11.7px;color:#444;">| ELA | LP5</div>
<div class="a" style="left:1324px;top:310px;width:308.5px;height:33.8px;background:#668e9b;border-radius:0 0 4px 4px;box-shadow:0 1px 2px rgba(0,0,0,0.18);overflow:hidden"><div class="a" style="left:85.5px;top:0;width:89.0px;height:34px;background:#4e717b"></div></div>
<div class="t" style="left:1327.5px;top:328px;font-size:11.5px;color:#ffffff;font-weight:bold;">Drywall</div>
<div class="t" style="right:101.5px;top:328px;font-size:11.3px;color:#ffffff;font-weight:bold;">| DDL | LP5</div>
<div class="a" style="left:1636px;top:310px;width:75px;height:33.5px;background:#c2c2c2;border-radius:0 0 4px 4px"></div>
<div class="t" style="left:1639.5px;top:327px;font-size:11.7px;color:#555;">Painter</div>
<div class="a" style="left:741px;top:345px;width:2px;height:164px;background:#f5a100;"></div>
<svg style="left:728px;top:284px" width="28" height="26" viewBox="0 0 28 26"><path d="M14 2 L25.7 12.8 L14 23.6 L2.3 12.8z" fill="#ffab1c" stroke="#c98600" stroke-width="1.3" stroke-linejoin="round"/><text x="14" y="16.8" text-anchor="middle" font-family="Liberation Sans" font-size="12" fill="#4a4a4a" textLength="14" lengthAdjust="spacingAndGlyphs">M1</text></svg>
<div class="a" style="left:387.5px;top:347.2px;width:308px;height:144.6px;border-radius:0 0 4px 4px;box-shadow:0 0 2.5px 2px rgba(95,138,225,0.8),0 0 6px 2px rgba(130,165,240,0.3)"></div>
<div class="a" style="left:387.5px;top:347.2px;width:308px;height:144.6px;background:#b5c95f;border-radius:0 0 4px 4px;overflow:hidden">
<div class="a" style="left:0;top:0;width:308px;height:26.6px;background:#fff;border-bottom:1px solid #8fa145;border-top:1px solid #b5c95f"></div>
<div class="a" style="left:84.7px;top:26.6px;width:89px;height:120px;background:#8f9e4a"></div>
</div>
<div class="a" style="left:391.5px;top:351.2px;width:16px;height:16.4px;border:1.3px solid #8a8a8a;border-radius:3px;background:#fff"></div>
<svg style="left:391.5px;top:351.2px" width="16" height="16" viewBox="0 0 16 16"><path d="M3.5 11.2 Q8 6.5 12.5 11.2 Q8 12.6 3.5 11.2z" fill="#f9b43a"/><text x="8" y="10.6" text-anchor="middle" font-family="Liberation Sans" font-size="8.5" font-weight="bold" fill="#1a1a1a">2</text></svg>
<div class="a" style="left:414px;top:351.2px;width:15.5px;height:16.4px;border:1.3px solid #8a8a8a;border-radius:3px;background:#fff"></div>
<svg style="left:414px;top:351.2px" width="16" height="16" viewBox="0 0 16 16"><text x="7.8" y="11" text-anchor="middle" font-family="Liberation Sans" font-size="9" fill="#222">2</text><path d="M5.8 3.6 H9.8 M5.8 12.5 H9.8" stroke="#777" stroke-width="0.7"/></svg>
<div class="t" style="left:391px;top:379px;font-size:17px;color:#4a4a4a;">Rohrleitung</div>
<div class="t" style="left:390.5px;top:476px;font-size:11.8px;color:#444;">HVS</div>
<div class="t" style="right:1038px;top:476px;font-size:11.6px;color:#444;">| HVS | LP5</div>
<div class="a" style="left:1711px;top:310px;width:19px;height:199px;background:#f1f1f1;"></div>
<svg style="left:1716px;top:316px" width="10" height="7" viewBox="0 0 10 7"><path d="M1 6 H9 L5 1.5z" fill="#505050"/></svg>
<div class="a" style="left:1716px;top:335px;width:11px;height:17px;background:#c1c1c1;"></div>
<svg style="left:1716px;top:494px" width="10" height="7" viewBox="0 0 10 7"><path d="M1 1 H9 L5 5.5z" fill="#505050"/></svg>
<div class="a" style="left:340px;top:509px;width:1390px;height:19px;background:#f1f1f1;"></div>
<svg style="left:346px;top:514px" width="7" height="10" viewBox="0 0 7 10"><path d="M6 1 V9 L1.5 5z" fill="#9a9a9a"/></svg>
<div class="a" style="left:360px;top:511.5px;width:341px;height:14.5px;background:#c1c1c1;"></div>
<svg style="left:1697px;top:514px" width="7" height="10" viewBox="0 0 7 10"><path d="M1 1 V9 L5.5 5z" fill="#505050"/></svg>
<div class="a" style="left:1711px;top:509px;width:19px;height:19px;background:#dcdcdc;"></div>
<div class="a" style="left:1460px;top:320px;width:255px;height:195px;background:rgba(252,252,252,0.78);border-radius:6px;box-shadow:0 0 2px rgba(0,0,0,0.08)"></div>
<div class="a" style="left:1465px;top:324.5px;width:247px;height:185px;border:1.2px solid #8f8f8f;background:rgba(253,253,253,0.35)"></div>
<div class="a" style="left:1500px;top:346px;width:1px;height:162px;background:#efefef;"></div>
<div class="a" style="left:1545px;top:346px;width:1px;height:162px;background:#efefef;"></div>
<div class="a" style="left:1589px;top:346px;width:1px;height:162px;background:#efefef;"></div>
<div class="a" style="left:1634px;top:346px;width:1px;height:162px;background:#efefef;"></div>
<div class="a" style="left:1678px;top:346px;width:1px;height:162px;background:#efefef;"></div>
<div class="a" style="left:1466px;top:349.5px;width:150px;height:1px;background:#eeeeee;"></div>
<div class="a" style="left:1466px;top:361.5px;width:150px;height:1px;background:#eeeeee;"></div>
<div class="a" style="left:1466px;top:374px;width:150px;height:1px;background:#eeeeee;"></div>
<div class="a" style="left:1466px;top:386.5px;width:150px;height:1px;background:#eeeeee;"></div>
<div class="a" style="left:1466px;top:497.5px;width:245px;height:1px;background:#eeeeee;"></div>
<div class="a" style="left:1467px;top:325.5px;width:8px;height:3px;background:#fff;border:0.8px solid #999"></div>
<div class="a" style="left:1477px;top:325.5px;width:7px;height:3px;background:#5e8c98;"></div>
<div class="a" style="left:1484px;top:325.5px;width:8px;height:3px;background:#fff;border:0.8px solid #999"></div>
<div class="a" style="left:1493px;top:325.5px;width:7px;height:3px;background:#5e8c98;"></div>
<div class="a" style="left:1502px;top:325.5px;width:9px;height:3px;background:#b0b0b0;"></div>
<div class="a" style="left:1511px;top:325.5px;width:8px;height:3px;background:#3e87e0;"></div>
<div class="a" style="left:1519px;top:325.5px;width:8px;height:3px;background:#fff;border:0.8px solid #999"></div>
<div class="a" style="left:1528px;top:325.5px;width:8px;height:3px;background:#3e87e0;"></div>
<div class="a" style="left:1536px;top:325.5px;width:9px;height:3px;background:#b0b0b0;"></div>
<div class="a" style="left:1545px;top:325.5px;width:8px;height:3px;background:#fff;border:0.8px solid #999"></div>
<div class="a" style="left:1468px;top:329.0px;width:8px;height:2.5px;background:#b5c95f;"></div>
<div class="a" style="left:1520px;top:329.0px;width:7px;height:2.5px;background:#b5c95f;"></div>
<div class="a" style="left:1467px;top:338px;width:8px;height:3px;background:#fff;border:0.8px solid #999"></div>
<div class="a" style="left:1477px;top:338px;width:7px;height:3px;background:#5e8c98;"></div>
<div class="a" style="left:1484px;top:338px;width:8px;height:3px;background:#fff;border:0.8px solid #999"></div>
<div class="a" style="left:1493px;top:338px;width:7px;height:3px;background:#5e8c98;"></div>
<div class="a" style="left:1502px;top:338px;width:9px;height:3px;background:#b0b0b0;"></div>
<div class="a" style="left:1511px;top:338px;width:8px;height:3px;background:#3e87e0;"></div>
<div class="a" style="left:1519px;top:338px;width:8px;height:3px;background:#fff;border:0.8px solid #999"></div>
<div class="a" style="left:1528px;top:338px;width:8px;height:3px;background:#3e87e0;"></div>
<div class="a" style="left:1536px;top:338px;width:9px;height:3px;background:#b0b0b0;"></div>
<div class="a" style="left:1545px;top:338px;width:8px;height:3px;background:#fff;border:0.8px solid #999"></div>
<div class="a" style="left:1468px;top:341.5px;width:8px;height:2.5px;background:#b5c95f;"></div>
<div class="a" style="left:1520px;top:341.5px;width:7px;height:2.5px;background:#b5c95f;"></div>
<div class="a" style="left:1467px;top:350.5px;width:8px;height:3px;background:#fff;border:0.8px solid #999"></div>
<div class="a" style="left:1477px;top:350.5px;width:7px;height:3px;background:#5e8c98;"></div>
<div class="a" style="left:1484px;top:350.5px;width:8px;height:3px;background:#fff;border:0.8px solid #999"></div>
<div class="a" style="left:1493px;top:350.5px;width:7px;height:3px;background:#5e8c98;"></div>
<div class="a" style="left:1502px;top:350.5px;width:9px;height:3px;background:#b0b0b0;"></div>
<div class="a" style="left:1511px;top:350.5px;width:8px;height:3px;background:#3e87e0;"></div>
<div class="a" style="left:1519px;top:350.5px;width:8px;height:3px;background:#fff;border:0.8px solid #999"></div>
<div class="a" style="left:1528px;top:350.5px;width:8px;height:3px;background:#3e87e0;"></div>
<div class="a" style="left:1536px;top:350.5px;width:9px;height:3px;background:#b0b0b0;"></div>
<div class="a" style="left:1545px;top:350.5px;width:8px;height:3px;background:#fff;border:0.8px solid #999"></div>
<div class="a" style="left:1468px;top:354.0px;width:8px;height:2.5px;background:#b5c95f;"></div>
<div class="a" style="left:1520px;top:354.0px;width:7px;height:2.5px;background:#b5c95f;"></div>
<div class="a" style="left:1466px;top:329px;width:39px;height:4px;border:0.8px solid #e87f6a"></div>
<div class="a" style="left:1467px;top:363px;width:17px;height:3px;background:#fff;border:0.8px solid #999"></div>
<div class="a" style="left:1485px;top:363px;width:8px;height:3px;background:#5e8c98;"></div>
<div class="a" style="left:1493px;top:363px;width:8px;height:3px;background:#fff;border:0.8px solid #999"></div>
<div class="a" style="left:1502px;top:363px;width:8px;height:3px;background:#5e8c98;"></div>
<div class="a" style="left:1510px;top:363px;width:8px;height:3px;background:#b0b0b0;"></div>
<div class="a" style="left:1519px;top:363px;width:16px;height:3px;background:#3e87e0;"></div>
<div class="a" style="left:1536px;top:363px;width:8px;height:3px;background:#fff;border:0.8px solid #999"></div>
<div class="a" style="left:1545px;top:363px;width:8px;height:3px;background:#3e87e0;"></div>
<div class="a" style="left:1553px;top:363px;width:9px;height:3px;background:#b0b0b0;"></div>
<div class="a" style="left:1562px;top:363px;width:8px;height:3px;background:#fff;border:0.8px solid #999"></div>
<div class="a" style="left:1468px;top:366.5px;width:17px;height:2.5px;background:#b5c95f;"></div>
<div class="a" style="left:1537px;top:366.5px;width:7px;height:2.5px;background:#b5c95f;"></div>
<div class="a" style="left:1553px;top:375.5px;width:26px;height:3px;background:#fff;border:0.8px solid #999"></div>
<div class="a" style="left:1579px;top:375.5px;width:35px;height:3px;background:#3e87e0;"></div>
<div class="a" style="left:1554px;top:379.0px;width:25px;height:2.5px;background:#b5c95f;"></div>
<div class="a" style="left:76px;top:528px;width:1654px;height:6px;background:#f1f1f1;"></div>
<svg style="left:889px;top:527px" width="26" height="7" viewBox="0 0 26 7"><path d="M1 2.5 H25 M1 5 H25" stroke="#888" stroke-width="1.2"/></svg>
<div class="a" style="left:76px;top:534px;width:1654px;height:314px;background:#ffffff;"></div>
<svg style="left:87.5px;top:554px" width="14" height="14" viewBox="0 0 14 14"><circle cx="7" cy="7" r="5.9" fill="none" stroke="#777" stroke-width="1.2"/><circle cx="7" cy="7" r="3.4" fill="#8a8a8a"/></svg>
<div class="t" style="left:126.5px;top:554px;font-size:14.7px;color:#8f8f8f;">ATTACHMENTS</div>
<svg style="left:342px;top:553px;" width="20" height="20" viewBox="0 0 24 24"><path fill="#5f6670" d="M19.35 10.04C18.67 6.59 15.64 4 12 4 9.11 4 6.6 5.64 5.35 8.04 2.34 8.36 0 10.91 0 14c0 3.31 2.69 6 6 6h13c2.76 0 5-2.24 5-5 0-2.64-2.05-4.78-4.65-4.96zM14 13v4h-4v-4H7l5-5 5 5h-3z"/></svg>
<div class="t" style="left:365px;top:558px;font-size:14.7px;color:#5f6670;">Upload Attachment</div>
<svg style="left:512px;top:553px;" width="20" height="20" viewBox="0 0 24 24"><path fill="#b5b5b5" d="M19.35 10.04C18.67 6.59 15.64 4 12 4 9.11 4 6.6 5.64 5.35 8.04 2.34 8.36 0 10.91 0 14c0 3.31 2.69 6 6 6h13c2.76 0 5-2.24 5-5 0-2.64-2.05-4.78-4.65-4.96zM17 13l-5 5-5-5h3V9h4v4h3z"/></svg>
<div class="t" style="left:535px;top:558px;font-size:14.7px;color:#b5b5b5;">Download</div>
<svg style="left:622px;top:554px;" width="18" height="18" viewBox="0 0 24 24"><path fill="#b5b5b5" d="M6 19c0 1.1.9 2 2 2h8c1.1 0 2-.9 2-2V7H6v12zM19 4h-3.5l-1-1h-5l-1 1H5v2h14V4z"/></svg>
<div class="t" style="left:643px;top:558px;font-size:14.7px;color:#b5b5b5;">Remove</div>
<svg style="left:1688.4px;top:553.9px;" width="18.9" height="18.9" viewBox="0 0 24 24"><path fill="#5f6670" d="M19 6.41L17.59 5 12 10.59 6.41 5 5 6.41 10.59 12 5 17.59 6.41 19 12 13.41 17.59 19 19 17.59 13.41 12z"/></svg>
<div class="a" style="left:76px;top:588.5px;width:1654px;height:1.5px;background:#eeeeee;"></div>
<div class="t" style="left:81px;top:599px;font-size:14.7px;color:#333;">All Fragnet Steps</div>
<div class="a" style="left:75px;top:623px;width:246px;height:32.5px;background:#9a9a9a;"></div>
<div class="t" style="left:81px;top:632px;font-size:14.7px;color:#f4f4f4;">Selected Fragnet Step(s)</div>
<div class="a" style="left:322px;top:590px;width:1.5px;height:258px;background:#ececec;"></div>
<div class="a" style="left:267px;top:706px;width:51px;height:51px;border-radius:50%;background:#b3c863"></div>
<svg style="left:267px;top:706px" width="51" height="51" viewBox="0 0 51 51"><text x="25.8" y="38.2" text-anchor="middle" font-family="Liberation Sans" font-size="33.5" fill="#333" transform="translate(25.8 0) scale(0.9 1) translate(-25.8 0)">9</text></svg>
<div class="a" style="left:336px;top:608px;width:18.5px;height:18.5px;border:1px solid #c9c9c9;background:#fcfcfc"></div>
<div class="t" style="left:398px;top:612px;font-size:14.5px;color:#444;font-weight:bold;">FRAGN&#8230;</div>
<svg style="left:488.5px;top:611.5px" width="14" height="10" viewBox="0 0 14 10"><path d="M0.3 1 H13.3 M2.8 4.4 H10.8 M5.3 7.8 H8.3" stroke="#6a6a6a" stroke-width="1.05"/></svg>
<svg style="left:530px;top:610px" width="11" height="17" viewBox="0 0 11 17"><path d="M1 6 L5.5 1.5 L10 6 M1 11 L5.5 15.5 L10 11" fill="none" stroke="#dcdcdc" stroke-width="1.5"/></svg>
<div class="a" style="left:568px;top:606px;width:1.5px;height:25px;background:#d8d8d8;"></div>
<div class="t" style="left:584px;top:612px;font-size:14.5px;color:#444;font-weight:bold;">TRADE-COMPA&#8230;</div>
<svg style="left:736.5px;top:611.5px" width="14" height="10" viewBox="0 0 14 10"><path d="M0.3 1 H13.3 M2.8 4.4 H10.8 M5.3 7.8 H8.3" stroke="#6a6a6a" stroke-width="1.05"/></svg>
<svg style="left:778px;top:610px" width="11" height="17" viewBox="0 0 11 17"><path d="M1 6 L5.5 1.5 L10 6 M1 11 L5.5 15.5 L10 11" fill="none" stroke="#dcdcdc" stroke-width="1.5"/></svg>
<div class="a" style="left:816px;top:606px;width:1.5px;height:25px;background:#d8d8d8;"></div>
<div class="t" style="left:832px;top:612px;font-size:14.5px;color:#444;font-weight:bold;">TAKT ZONE</div>
<svg style="left:937.5px;top:611.5px" width="14" height="10" viewBox="0 0 14 10"><path d="M0.3 1 H13.3 M2.8 4.4 H10.8 M5.3 7.8 H8.3" stroke="#6a6a6a" stroke-width="1.05"/></svg>
<svg style="left:978px;top:610px" width="11" height="17" viewBox="0 0 11 17"><path d="M1 6 L5.5 1.5 L10 6 M1 11 L5.5 15.5 L10 11" fill="none" stroke="#dcdcdc" stroke-width="1.5"/></svg>
<div class="a" style="left:1027px;top:606px;width:1.5px;height:25px;background:#d8d8d8;"></div>
<div class="t" style="left:1043px;top:612px;font-size:14.5px;color:#444;font-weight:bold;">NAME</div>
<svg style="left:1108.5px;top:611.5px" width="14" height="10" viewBox="0 0 14 10"><path d="M0.3 1 H13.3 M2.8 4.4 H10.8 M5.3 7.8 H8.3" stroke="#6a6a6a" stroke-width="1.05"/></svg>
<svg style="left:1150px;top:610px" width="11" height="17" viewBox="0 0 11 17"><path d="M1 6 L5.5 1.5 L10 6 M1 11 L5.5 15.5 L10 11" fill="none" stroke="#dcdcdc" stroke-width="1.5"/></svg>
<div class="a" style="left:1213px;top:606px;width:1.5px;height:25px;background:#d8d8d8;"></div>
<div class="t" style="left:1228px;top:612px;font-size:14.5px;color:#444;font-weight:bold;">FORMAT</div>
<svg style="left:1313.5px;top:611.5px" width="14" height="10" viewBox="0 0 14 10"><path d="M0.3 1 H13.3 M2.8 4.4 H10.8 M5.3 7.8 H8.3" stroke="#6a6a6a" stroke-width="1.05"/></svg>
<svg style="left:1354px;top:610px" width="11" height="17" viewBox="0 0 11 17"><path d="M1 6 L5.5 1.5 L10 6 M1 11 L5.5 15.5 L10 11" fill="none" stroke="#dcdcdc" stroke-width="1.5"/></svg>
<div class="a" style="left:1398px;top:606px;width:1.5px;height:25px;background:#d8d8d8;"></div>
<div class="a" style="left:1415px;top:610px;width:6px;height:18px;overflow:hidden"><div class="t" style="left:0;top:2px;font-size:14.5px;font-weight:bold;color:#444">S</div></div>
<svg style="left:1441.5px;top:611.5px" width="14" height="10" viewBox="0 0 14 10"><path d="M0.3 1 H13.3 M2.8 4.4 H10.8 M5.3 7.8 H8.3" stroke="#6a6a6a" stroke-width="1.05"/></svg>
<svg style="left:1483px;top:610px" width="11" height="17" viewBox="0 0 11 17"><path d="M1 6 L5.5 1.5 L10 6 M1 11 L5.5 15.5 L10 11" fill="none" stroke="#dcdcdc" stroke-width="1.5"/></svg>
<div class="a" style="left:1521px;top:606px;width:1.5px;height:25px;background:#d8d8d8;"></div>
<div class="t" style="left:1537px;top:612px;font-size:14.5px;color:#444;font-weight:bold;">ADDED&#8230;</div>
<svg style="left:1627.5px;top:611.5px" width="14" height="10" viewBox="0 0 14 10"><path d="M0.3 1 H13.3 M2.8 4.4 H10.8 M5.3 7.8 H8.3" stroke="#6a6a6a" stroke-width="1.05"/></svg>
<svg style="left:1669px;top:610px" width="11" height="17" viewBox="0 0 11 17"><path d="M1 6 L5.5 1.5 L10 6 M1 11 L5.5 15.5 L10 11" fill="none" stroke="#dcdcdc" stroke-width="1.5"/></svg>
<div class="a" style="left:1707px;top:606px;width:1.5px;height:25px;background:#d8d8d8;"></div>
<div class="t" style="left:1722px;top:612px;font-size:14.5px;color:#444;font-weight:bold;">A</div>
<div class="a" style="left:322px;top:644px;width:1408px;height:3px;background:#e8e8e8;"></div>
<div class="a" style="left:336px;top:672px;width:18.5px;height:18.5px;border:1px solid #c9c9c9;background:#fcfcfc"></div>
<div class="t" style="left:398px;top:676px;font-size:14.8px;color:#444;">Rohrleitung</div>
<div class="t" style="left:584.5px;top:676px;font-size:14.8px;color:#444;">HVS|HVS|LP5</div>
<div class="t" style="left:832px;top:676px;font-size:14.8px;color:#444;">R1 Small Office 1st Floor</div>
<svg style="left:1055px;top:677px" width="24" height="12" viewBox="0 0 24 12"><text x="1.5" y="4.6" font-family="Liberation Sans" font-size="4.6" font-weight="bold" fill="#aaaaaa" textLength="17" lengthAdjust="spacingAndGlyphs">BEISPIEL:</text><text x="1.5" y="10" font-family="Liberation Sans" font-size="4.6" font-weight="bold" fill="#aaaaaa" textLength="20" lengthAdjust="spacingAndGlyphs">ANHANG</text></svg>
<div class="t" style="left:1094px;top:676px;font-size:14.8px;color:#4a90d9;">Beispiel (1)</div>
<div class="t" style="left:1229.5px;top:676px;font-size:14.8px;color:#444;">PNG-file</div>
<div class="t" style="left:1416px;top:676px;font-size:14.8px;color:#444;">17.0 KB</div>
<div class="t" style="left:1538.5px;top:676px;font-size:14.8px;color:#444;">Anne Reuter</div>
<div class="t" style="left:1722px;top:676px;font-size:14.8px;color:#444;">1</div>
<div class="a" style="left:336px;top:736px;width:18.5px;height:18.5px;border:1px solid #c9c9c9;background:#fcfcfc"></div>
<div class="t" style="left:398px;top:740px;font-size:14.8px;color:#444;">Rohrleitung</div>
<div class="t" style="left:584.5px;top:740px;font-size:14.8px;color:#444;">HVS|HVS|LP5</div>
<div class="t" style="left:832px;top:740px;font-size:14.8px;color:#444;">R1 Small Office 1st Floor</div>
<svg style="left:1055px;top:741px" width="24" height="12" viewBox="0 0 24 12"><text x="1.5" y="4.6" font-family="Liberation Sans" font-size="4.6" font-weight="bold" fill="#aaaaaa" textLength="17" lengthAdjust="spacingAndGlyphs">BEISPIEL:</text><text x="1.5" y="10" font-family="Liberation Sans" font-size="4.6" font-weight="bold" fill="#aaaaaa" textLength="20" lengthAdjust="spacingAndGlyphs">ANHANG</text></svg>
<div class="t" style="left:1094px;top:740px;font-size:14.8px;color:#4a90d9;">Beispiel - 2</div>
<div class="t" style="left:1229.5px;top:740px;font-size:14.8px;color:#444;">PNG-file</div>
<div class="t" style="left:1416px;top:740px;font-size:14.8px;color:#444;">17.0 KB</div>
<div class="t" style="left:1538.5px;top:740px;font-size:14.8px;color:#444;">Anne Reuter</div>
<div class="t" style="left:1722px;top:740px;font-size:14.8px;color:#444;">1</div>
<div class="a" style="left:323px;top:713px;width:1407px;height:1px;background:#f1f1f1;"></div>
<div class="a" style="left:323px;top:777.5px;width:1407px;height:1px;background:#f1f1f1;"></div>
<div class="a" style="left:323px;top:830px;width:1407px;height:18px;background:#f1f1f1;"></div>
<svg style="left:328px;top:835px" width="7" height="10" viewBox="0 0 7 10"><path d="M6 1 V9 L1.5 5z" fill="#9a9a9a"/></svg>
<div class="a" style="left:341px;top:832px;width:1225px;height:16px;background:#c1c1c1;"></div>
<svg style="left:1715px;top:835px" width="7" height="10" viewBox="0 0 7 10"><path d="M1 1 V9 L5.5 5z" fill="#505050"/></svg>
</div></body></html>
